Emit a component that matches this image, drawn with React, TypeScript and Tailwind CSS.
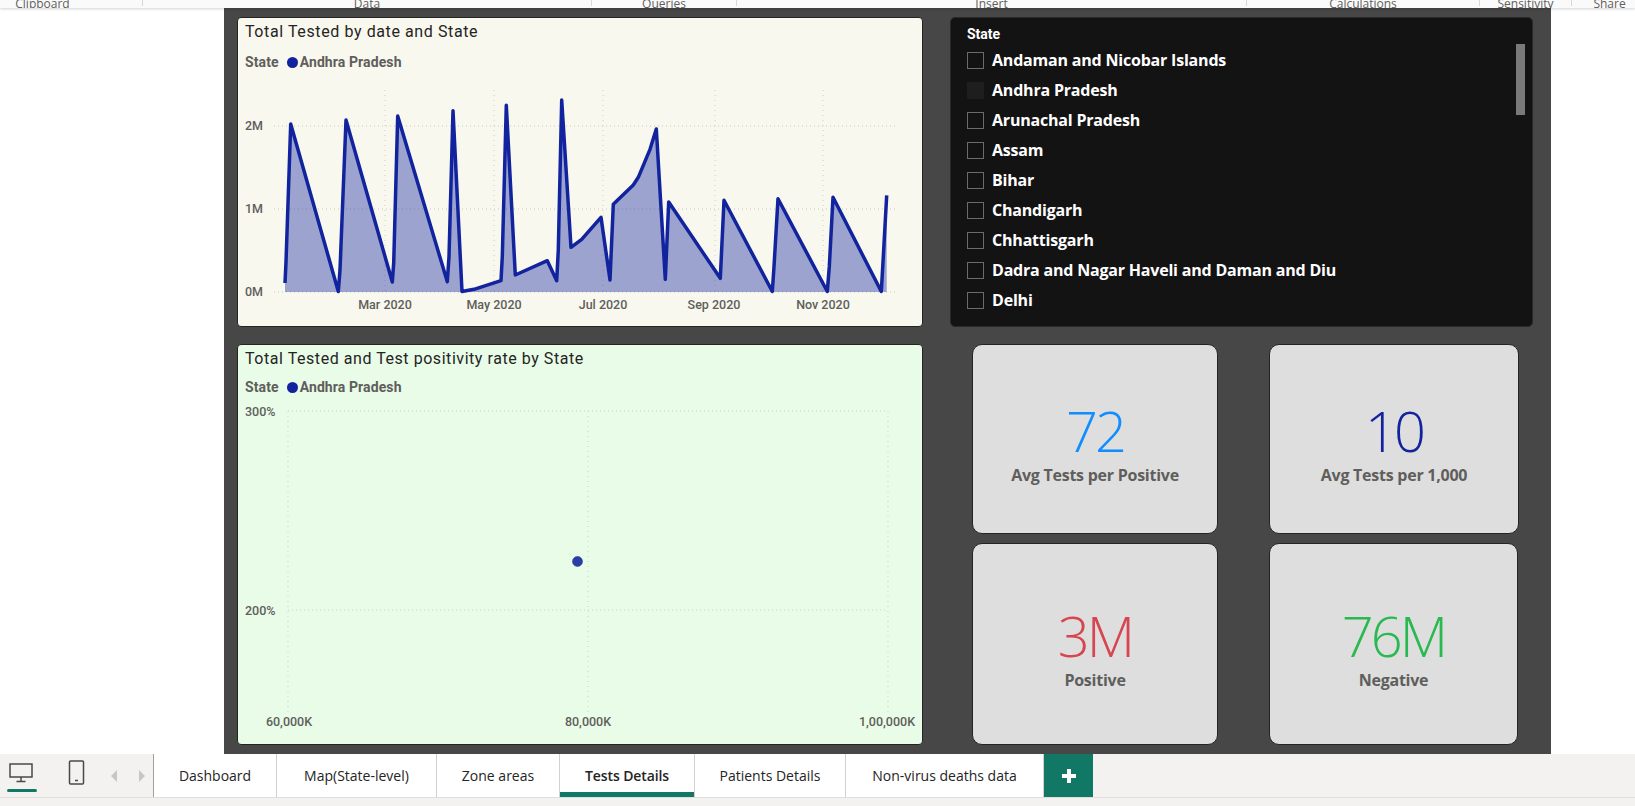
const line: [number, number][] = [
  [285, 283], [286, 262], [290.7, 124], [338.3, 291.5], [340, 270], [346, 120], [392.3, 282], [393.7, 263], [397.7, 116],
  [447.3, 281.7], [449, 256.7], [453, 110.7], [462, 291.5], [474, 289.3], [501, 280.7], [502.3, 256.7], [506.3, 105.3],
  [515.3, 275], [547.3, 260.7], [556.7, 280.7], [558.3, 250], [561.7, 100], [571, 247.3], [581.7, 239.3], [601, 217.3],
  [610, 280], [613.3, 204.3], [633.3, 185], [638.3, 177.3], [650, 149.3], [656.3, 129], [665.3, 279.3], [668.7, 202],
  [720.3, 278.3], [724, 200.3], [772.3, 291.5], [774, 266.7], [778, 198.7], [827.3, 291.5], [829.3, 266.7], [833, 197.3],
  [881.3, 291.5], [883.3, 256.7], [886.7, 195.3],
];
const pts = line.map((p) => p.join(",")).join(" ");
const area = `285,292 ${pts} 886.7,292`;

const ribbon: [string, string, string][] = [
  ["Clipboard", "w-[143px]", "pr-[57px]"],
  ["Data", "w-[449px]", ""],
  ["Queries", "w-[145px]", ""],
  ["Insert", "w-[510px]", ""],
  ["Calculations", "w-[233px]", ""],
  ["Sensitivity", "w-[92px]", ""],
  ["Share", "w-[63px]", "pl-[12px]"],
];
const states = [
  "Andaman and Nicobar Islands",
  "Andhra Pradesh",
  "Arunachal Pradesh",
  "Assam",
  "Bihar",
  "Chandigarh",
  "Chhattisgarh",
  "Dadra and Nagar Haveli and Daman and Diu",
  "Delhi",
];
const tabs: [string, string, boolean][] = [
  ["Dashboard", "w-[123px]", false],
  ["Map(State-level)", "w-[160px]", false],
  ["Zone areas", "w-[123px]", false],
  ["Tests Details", "w-[135px]", true],
  ["Patients Details", "w-[151px]", false],
  ["Non-virus deaths data", "w-[198px]", false],
];
const axisText = { fontFamily: "Roboto, sans-serif", fontSize: 12.5, fontWeight: 500, fill: "#605E5C" };

function Legend() {
  return (
    <div className="flex items-center h-4 pl-[7px] text-[14px] font-bold tracking-[0.1px] text-[#605e5c] font-['Roboto',sans-serif]">
      <span>State</span>
      <span className="ml-[8px] mr-[2px] w-[11px] h-[11px] rounded-full bg-[#12239e]" />
      <span>Andhra Pradesh</span>
    </div>
  );
}

function Kpi({ value, label, color, w, h, pt }: { value: string; label: string; color: string; w: string; h: string; pt: string }) {
  return (
    <div className={`${w} ${h} ${pt} shrink-0 bg-[#dedede] border border-[#252423] rounded-[10px] flex flex-col items-center justify-center font-['Open_Sans',sans-serif]`}>
      <div className={`${color} text-[56px] leading-[62px] font-light tracking-[-3px]`}>{value}</div>
      <div className="mt-[3px] text-[#605e5c] text-[16px] leading-[22px] font-bold tracking-[-0.25px]">{label}</div>
    </div>
  );
}

export default function App() {
  return (
    <div className="w-[1635px] h-[806px] overflow-hidden bg-white flex flex-col font-['Open_Sans',sans-serif]">
      <div className="h-2 shrink-0 flex bg-[#fafafa] shadow-[0_1px_3px_rgba(0,0,0,0.18)] relative z-10 overflow-hidden">
        {ribbon.map(([t, w, pad], i) => (
          <div key={t} className={`h-[6px] shrink-0 ${w} ${pad} flex justify-center items-end ${i < 6 ? "border-r border-[#d8d8d8]" : ""}`}>
            <span className="shrink-0 mb-[-6px] text-[12px] leading-[16px] text-[#605e5c] whitespace-nowrap">{t}</span>
          </div>
        ))}
      </div>

      <div className="h-[746px] shrink-0 flex">
        <div className="w-[224px] shrink-0 bg-white" />
        <div className="w-[1327px] shrink-0 bg-[#474747] pt-[9px] pl-[13px] flex flex-col gap-[17px]">
          <div className="flex gap-[27px] h-[310px]">
            <div className="w-[686px] h-[310px] bg-[#f8f8ee] border border-[#252423] rounded-[4px] overflow-hidden">
              <div className="pl-[7px] pt-[3px] h-[31px] text-[16px] leading-[22px] tracking-[0.6px] text-[#252423] font-['Roboto',sans-serif]">Total Tested by date and State</div>
              <div className="mt-[5px]"><Legend /></div>
              <svg viewBox="238 80 684 244" className="block w-[684px] h-[244px] mt-[10px]">
                {[385, 494, 603, 715, 823].map((x) => (
                  <line key={x} x1={x} x2={x} y1={90} y2={292} stroke="#cfcfc4" strokeWidth={1} strokeDasharray="1 4" />
                ))}
                {[126, 209, 292].map((y) => (
                  <line key={y} x1={274} x2={898} y1={y} y2={y} stroke="#c8c8be" strokeWidth={1} strokeDasharray="1 3" />
                ))}
                <polygon points={area} fill="#12239e" fillOpacity={0.4} />
                <polyline points={pts} fill="none" stroke="#12239e" strokeWidth={3.5} strokeLinejoin="round" />
                {[["2M", 126], ["1M", 209], ["0M", 292]].map(([t, y]) => (
                  <text key={t} x={245} y={Number(y) + 4} style={axisText}>{t}</text>
                ))}
                {[["Mar 2020", 385], ["May 2020", 494], ["Jul 2020", 603], ["Sep 2020", 714], ["Nov 2020", 823]].map(([t, x]) => (
                  <text key={t} x={x} y={309} textAnchor="middle" style={axisText}>{t}</text>
                ))}
              </svg>
            </div>
            <div className="w-[583px] h-[310px] bg-[#141314] rounded-[5px] pl-4 pt-[8px] relative overflow-hidden border border-[#2a2a2a]">
              <div className="text-white text-[14px] leading-[16px] font-bold font-['Roboto',sans-serif] h-[16px]">State</div>
              <div className="flex flex-col mt-[3px]">
                {states.map((s, i) => (
                  <div key={s} className="flex items-center h-[30px] gap-[8px]">
                    <span className={`w-[17px] h-[17px] shrink-0 ${i === 1 ? "bg-[#1e1e1e]" : "border border-[#6b6b6b]"}`} />
                    <span className="text-white text-[16px] font-bold tracking-[-0.2px] whitespace-nowrap">{s}</span>
                  </div>
                ))}
              </div>
              <div className="absolute right-[7px] top-[26px] w-[9px] h-[71px] bg-[#7a7a7a]" />
            </div>
          </div>
          <div className="flex h-[401px]">
            <div className="w-[686px] h-[401px] bg-[#e8fce8] border border-[#252423] rounded-[4px] overflow-hidden">
              <div className="pl-[7px] pt-[3px] h-[30px] text-[16px] leading-[22px] tracking-[0.55px] text-[#252423] font-['Roboto',sans-serif]">Total Tested and Test positivity rate by State</div>
              <div className="mt-[4px]"><Legend /></div>
              <svg viewBox="238 395 684 348" className="block w-[684px] h-[348px]">
                {[288, 588, 888].map((x) => (
                  <line key={x} x1={x} x2={x} y1={411} y2={712} stroke="#c3d8c3" strokeWidth={1} strokeDasharray="1 4" />
                ))}
                {[411, 610].map((y) => (
                  <line key={y} x1={288} x2={888} y1={y} y2={y} stroke="#c3d8c3" strokeWidth={1} strokeDasharray="1 3" />
                ))}
                <text x={245} y={416} style={axisText}>300%</text>
                <text x={245} y={615} style={axisText}>200%</text>
                {[["60,000K", 289], ["80,000K", 588], ["1,00,000K", 887]].map(([t, x]) => (
                  <text key={t} x={x} y={726} textAnchor="middle" style={axisText}>{t}</text>
                ))}
                <circle cx={577.5} cy={561.5} r={5} fill="#2b3ea8" stroke="#12239e" strokeWidth={0.5} />
              </svg>
            </div>
            <div className="ml-[49px] w-[548px] flex flex-col gap-[9px]">
              <div className="flex gap-[51px]">
                <Kpi value="72" label="Avg Tests per Positive" color="text-[#118dff]" w="w-[246px]" h="h-[190px]" pt="pt-[6px]" />
                <Kpi value="10" label="Avg Tests per 1,000" color="text-[#12239e]" w="w-[250px]" h="h-[190px]" pt="pt-[6px]" />
              </div>
              <div className="flex gap-[51px]">
                <Kpi value="3M" label="Positive" color="text-[#d64550]" w="w-[246px]" h="h-[202px]" pt="pt-[6px]" />
                <Kpi value="76M" label="Negative" color="text-[#2ab950]" w="w-[249px]" h="h-[202px]" pt="pt-[6px]" />
              </div>
            </div>
          </div>
        </div>
        <div className="flex-1 bg-white" />
      </div>

      <div className="h-[44px] shrink-0 flex bg-[#f3f2f1] border-b border-[#e1dfdd]">
        <div className="w-[154px] shrink-0 border-r border-[#a19f9d] flex relative">
          <div className="w-[42px] flex justify-center pl-[1px] pt-[9px]">
            <svg width="25" height="20" viewBox="0 0 25 20" fill="none" stroke="#4a4948" strokeWidth="1.5">
              <rect x="1" y="1" width="22" height="13" />
              <path d="M12 14v4M7.5 18.5h9" />
            </svg>
          </div>
          <div className="absolute left-[7px] top-[35px] w-[30px] h-[3px] bg-[#117865] rounded-full" />
          <div className="ml-[26px] pt-[6px]">
            <svg width="17" height="25" viewBox="0 0 17 25" fill="none" stroke="#4a4948" strokeWidth="1.5">
              <rect x="1.5" y="1" width="14" height="23" rx="1" />
              <path d="M7 20.5h3" />
            </svg>
          </div>
          <div className="ml-[25px] pt-[15px] flex gap-[20px]">
            <svg width="8" height="14" viewBox="0 0 8 14"><path d="M7 1 1 7l6 6z" fill="#c8c6c4" /></svg>
            <svg width="8" height="14" viewBox="0 0 8 14"><path d="M1 1l6 6-6 6z" fill="#c8c6c4" /></svg>
          </div>
        </div>
        {tabs.map(([t, w, active]) => (
          <div key={t} className={`${w} shrink-0 bg-white border-r border-[#d2d0ce] flex items-center justify-center text-[14px] text-[#252423] relative ${active ? "font-semibold tracking-[-0.1px]" : ""}`}>
            {t}
            {active && <span className="absolute left-0 right-0 bottom-0 h-[5px] bg-[#117865]" />}
          </div>
        ))}
        <div className="w-[49px] shrink-0 bg-[#117865] flex items-center justify-center text-white">
          <svg width="14" height="14" viewBox="0 0 14 14"><path d="M5 0h4v5h5v4H9v5H5V9H0V5h5z" fill="#fff" /></svg>
        </div>
      </div>
      <div className="h-2 shrink-0 bg-[#f3f2f1]" />
    </div>
  );
}
